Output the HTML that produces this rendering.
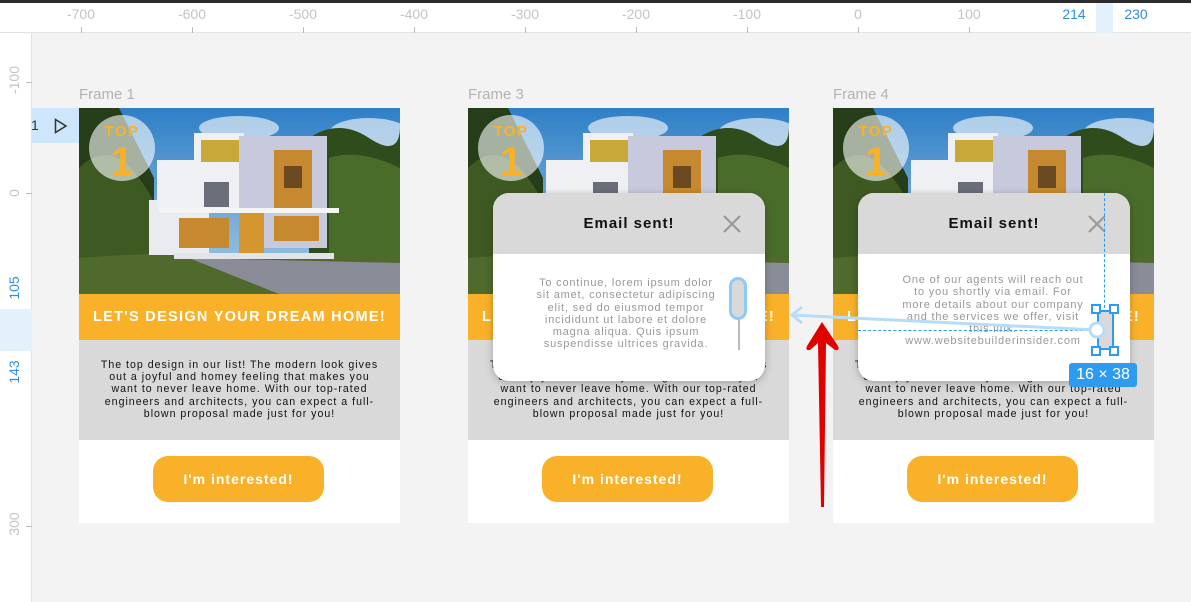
<!DOCTYPE html>
<html><head><meta charset="utf-8">
<style>
*{margin:0;padding:0;box-sizing:border-box}
body{width:1191px;height:602px;background:#f3f3f3;position:relative;overflow:hidden;font-family:"Liberation Sans",sans-serif}
.abs{position:absolute}
.topbar{left:0;top:0;width:1191px;height:3px;background:#2c2c2c}
.hr{left:0;top:3px;width:1191px;height:30px;background:#fff;border-bottom:1px solid #e3e3e3}
.vr{left:0;top:33px;width:32px;height:569px;background:#fff;border-right:1px solid #e3e3e3}
.hl{color:#c4c4c4;font-size:14px;top:6px;transform:translateX(-50%)}
.tk{width:1px;height:6px;background:#bbb;top:27px}
.vl{color:#c4c4c4;font-size:14px;left:14px;transform:translate(-50%,-50%) rotate(-90deg)}
.vt{height:1px;width:6px;background:#bbb;left:26px}
.flabel{color:#b3b3b3;font-size:15px}
.card{width:321px;height:415px;background:#fff}
.img{left:0;top:0;width:321px;height:186px;overflow:hidden}
.band{left:0;top:186px;width:321px;height:46px;background:#f9b12a;color:#fff;font-weight:bold;font-size:14.5px;letter-spacing:1.3px;text-align:center;line-height:46px}
.gray{left:0;top:232px;width:321px;height:100px;background:#d9d9d9;color:#111;font-size:10.6px;letter-spacing:1px;line-height:12.2px;text-align:center;padding-top:19px}
.btn{left:74px;top:348px;width:171px;height:46px;border-radius:15px;background:#f9b12a;color:#fff;font-size:14px;font-weight:bold;letter-spacing:1px;text-align:center;line-height:46px}
.modal{width:272px;height:188px;background:#fff;border-radius:16px;overflow:hidden;box-shadow:0 2px 8px rgba(0,0,0,.25)}
.mh{left:0;top:0;width:272px;height:61px;background:#d9d9d9;text-align:center;line-height:62px;font-weight:bold;font-size:15px;letter-spacing:1px;color:#111}
.mt{width:200px;color:#999;font-size:11px;letter-spacing:.8px;line-height:12.3px;text-align:center}
.top{left:10px;top:15px;width:66px;text-align:center;color:#f9b12a;font-weight:bold;font-size:15px;line-height:17px;letter-spacing:1.5px}
.one{left:10px;top:34px;width:66px;text-align:center;color:#f9b12a;font-weight:bold;font-size:40px;line-height:40px}
</style></head><body>
<svg width="0" height="0" style="position:absolute">
<defs>
<linearGradient id="sky" x1="0" y1="0" x2="0" y2="1"><stop offset="0" stop-color="#2f7fc7"/><stop offset="1" stop-color="#a9cde6"/></linearGradient>
<g id="house">
<rect width="321" height="186" fill="url(#sky)"/>
<ellipse cx="160" cy="20" rx="40" ry="12" fill="#e6eef6" opacity=".7"/>
<ellipse cx="290" cy="25" rx="40" ry="15" fill="#e6eef6" opacity=".7"/>
<path d="M0 0H40L60 40L75 70V186H0Z" fill="#253d18"/>
<path d="M0 60Q30 30 60 70T80 140V186H0Z" fill="#3e5a22"/>
<path d="M230 30Q260 10 290 30T321 20V150H230Z" fill="#2f4c1c"/>
<path d="M250 50Q280 40 321 60V150H250Z" fill="#4a6c2b"/>
<path d="M0 150Q120 140 321 150V186H0Z" fill="#4f6a2c"/>
<path d="M110 150L321 155V186H200Z" fill="#8a8d98"/>
<rect x="70" y="92" width="60" height="55" fill="#e9ebef"/>
<rect x="78" y="52" width="82" height="48" fill="#eef0f3"/>
<rect x="115" y="25" width="50" height="30" fill="#eef0f3"/>
<rect x="122" y="32" width="38" height="22" fill="#c9a83a"/>
<rect x="160" y="28" width="88" height="112" fill="#c7c9dc"/>
<rect x="195" y="42" width="38" height="60" fill="#c7892f"/>
<rect x="205" y="58" width="18" height="22" fill="#6b4a22"/>
<rect x="80" y="100" width="180" height="5" fill="#f4f4f4"/>
<rect x="100" y="110" width="50" height="30" fill="#c7892f"/>
<rect x="160" y="105" width="25" height="40" fill="#d6962f"/>
<rect x="195" y="108" width="45" height="25" fill="#c7892f"/>
<rect x="125" y="74" width="25" height="25" fill="#6a6e78"/>
<rect x="95" y="145" width="160" height="6" fill="#e3e4e8"/>
</g>
<g id="badge">
<circle cx="43" cy="40" r="33" fill="#fff" opacity=".6"/>
</g>
</defs>
</svg>

<div class="abs topbar"></div>
<div class="abs hr"></div>
<div class="abs vr"></div>
<div class="abs" style="left:1096px;top:3px;width:17px;height:30px;background:#e3f1fd"></div>
<div class="abs" style="left:0;top:309px;width:32px;height:42px;background:#e3f1fd"></div>

<div class="abs hl" style="left:81px">-700</div><div class="abs tk" style="left:81px"></div>
<div class="abs hl" style="left:192px">-600</div><div class="abs tk" style="left:192px"></div>
<div class="abs hl" style="left:303px">-500</div><div class="abs tk" style="left:303px"></div>
<div class="abs hl" style="left:414px">-400</div><div class="abs tk" style="left:414px"></div>
<div class="abs hl" style="left:525px">-300</div><div class="abs tk" style="left:525px"></div>
<div class="abs hl" style="left:636px">-200</div><div class="abs tk" style="left:636px"></div>
<div class="abs hl" style="left:747px">-100</div><div class="abs tk" style="left:747px"></div>
<div class="abs hl" style="left:858px">0</div><div class="abs tk" style="left:858px"></div>
<div class="abs hl" style="left:969px">100</div><div class="abs tk" style="left:969px"></div>
<div class="abs hl" style="left:1074px;color:#2d8fe6">214</div>
<div class="abs hl" style="left:1136px;color:#2d8fe6">230</div>

<div class="abs vl" style="top:80px">-100</div><div class="abs vt" style="top:82px"></div>
<div class="abs vl" style="top:193px">0</div><div class="abs vt" style="top:193px"></div>
<div class="abs vl" style="top:288px;color:#2d8fe6">105</div>
<div class="abs vl" style="top:372px;color:#2d8fe6">143</div>
<div class="abs vl" style="top:524px">300</div><div class="abs vt" style="top:526px"></div>

<div class="abs" style="left:32px;top:108px;width:47px;height:35px;background:#cde6fb"></div>
<div class="abs" style="left:31px;top:117px;font-size:14px;color:#333">1</div>
<svg class="abs" style="left:54px;top:118px" width="14" height="16"><path d="M1.5 1.5L12 8L1.5 14.5Z" fill="none" stroke="#333" stroke-width="1.5"/></svg>

<div class="abs flabel" style="left:79px;top:86px">Frame 1</div>
<div class="abs flabel" style="left:468px;top:86px">Frame 3</div>
<div class="abs flabel" style="left:833px;top:86px">Frame 4</div>

<div class="abs card" style="left:79px;top:108px">
 <svg class="abs img" viewBox="0 0 321 186"><use href="#house"/><use href="#badge"/></svg>
 <div class="abs top">TOP</div>
 <div class="abs one">1</div>
 <div class="abs band">LET'S DESIGN YOUR DREAM HOME!</div>
 <div class="abs gray">The top design in our list! The modern look gives<br>out a joyful and homey feeling that makes you<br>want to never leave home. With our top-rated<br>engineers and architects, you can expect a full-<br>blown proposal made just for you!</div>
 <div class="abs btn">I'm interested!</div>
</div>
<div class="abs card" style="left:468px;top:108px">
 <svg class="abs img" viewBox="0 0 321 186"><use href="#house"/><use href="#badge"/></svg>
 <div class="abs top">TOP</div>
 <div class="abs one">1</div>
 <div class="abs band">LET'S DESIGN YOUR DREAM HOME!</div>
 <div class="abs gray">The top design in our list! The modern look gives<br>out a joyful and homey feeling that makes you<br>want to never leave home. With our top-rated<br>engineers and architects, you can expect a full-<br>blown proposal made just for you!</div>
 <div class="abs btn">I'm interested!</div>
</div>
<div class="abs card" style="left:833px;top:108px">
 <svg class="abs img" viewBox="0 0 321 186"><use href="#house"/><use href="#badge"/></svg>
 <div class="abs top">TOP</div>
 <div class="abs one">1</div>
 <div class="abs band">LET'S DESIGN YOUR DREAM HOME!</div>
 <div class="abs gray">The top design in our list! The modern look gives<br>out a joyful and homey feeling that makes you<br>want to never leave home. With our top-rated<br>engineers and architects, you can expect a full-<br>blown proposal made just for you!</div>
 <div class="abs btn">I'm interested!</div>
</div>

<div class="abs modal" style="left:493px;top:193px">
 <div class="abs mh">Email sent!</div>
 <svg class="abs" style="left:229px;top:21px" width="20" height="20"><path d="M2 2L18 18M18 2L2 18" stroke="#999" stroke-width="2.2"/></svg>
 <div class="abs mt" style="left:33px;top:84px">To continue, lorem ipsum dolor<br>sit amet, consectetur adipiscing<br>elit, sed do eiusmod tempor<br>incididunt ut labore et dolore<br>magna aliqua. Quis ipsum<br>suspendisse ultrices gravida.</div>
 <div class="abs" style="left:236px;top:84px;width:18px;height:43px;border:3px solid #8ccaf7;border-radius:9px;background:#d9d9d9"></div>
 <div class="abs" style="left:245px;top:127px;width:2px;height:30px;background:#bbb"></div>
</div>

<div class="abs modal" style="left:858px;top:193px">
 <div class="abs mh">Email sent!</div>
 <svg class="abs" style="left:229px;top:21px" width="20" height="20"><path d="M2 2L18 18M18 2L2 18" stroke="#999" stroke-width="2.2"/></svg>
 <div class="abs mt" style="left:22px;top:81px;width:226px">One of our agents will reach out<br>to you shortly via email. For<br>more details about our company<br>and the services we offer, visit<br>this link:<br>www.websitebuilderinsider.com</div>
</div>
<div class="abs" style="left:1104px;top:193px;height:125px;border-left:1.5px dashed #2d9cf0"></div>
<div class="abs" style="left:858px;top:330px;width:240px;border-top:1.5px dashed #2d9cf0"></div>
<div class="abs" style="left:1097px;top:310px;width:17px;height:40px;background:#d9d9d9;border:2px solid #2d9cf0"></div>
<div class="abs" style="left:1091px;top:304px;width:10px;height:10px;background:#fff;border:2px solid #2d9cf0"></div>
<div class="abs" style="left:1109px;top:304px;width:10px;height:10px;background:#fff;border:2px solid #2d9cf0"></div>
<div class="abs" style="left:1091px;top:346px;width:10px;height:10px;background:#fff;border:2px solid #2d9cf0"></div>
<div class="abs" style="left:1109px;top:346px;width:10px;height:10px;background:#fff;border:2px solid #2d9cf0"></div>
<div class="abs" style="left:1069px;top:363px;width:68px;height:24px;background:#2d9cf0;border-radius:3px;color:#fff;font-size:16px;text-align:center;line-height:24px">16 × 38</div>

<svg class="abs" style="left:0;top:0" width="1191" height="602">
 <path d="M792 315L1097 330" stroke="#b7dcf8" stroke-width="3" fill="none"/>
 <path d="M802 307L792 315L802 323" stroke="#b7dcf8" stroke-width="3" fill="none"/>
 <circle cx="1097" cy="330" r="7" fill="#fff" stroke="#b7dcf8" stroke-width="3"/>
 <path d="M822 322L838 346Q840 351 835 350L826 343L824 507L821 507L818 343L810 350Q805 351 807 346Z" fill="#e00000"/>
</svg>
</body></html>
